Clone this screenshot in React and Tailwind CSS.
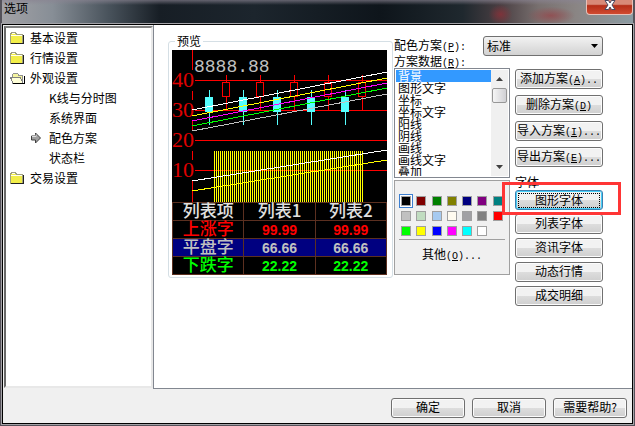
import React, { useState } from 'react';

const menu = [
  { name: "基本设置", icon: "closed" },
  { name: "行情设置", icon: "closed" },
  { name: "外观设置", icon: "open", children: ["K线与分时图", "系统界面", "配色方案", "状态栏"] },
  { name: "交易设置", icon: "closed" },
];

const items = ["背景", "图形文字", "坐标", "坐标文字", "阳线", "阴线", "画线", "画线文字", "叠加"];

const colors = [
  "#000000", "#800000", "#008000", "#808000", "#000080", "#800080", "#008080",
  "#c0c0c0", "#c0dcc0", "#a6caf0", "#fffbf0", "#a0a0a4", "#808080", "#ff0000",
  "#00ff00", "#ffff00", "#0000ff", "#ff00ff", "#00ffff", "#ffffff",
];

const rows = [
  { name: "上涨字", value: "99.99", style: "text-[#ff0000]" },
  { name: "平盘字", value: "66.66", style: "text-[#c0c0c0] bg-[#000080]" },
  { name: "下跌字", value: "22.22", style: "text-[#00ff00]" },
];

function FolderIcon({ open }) {
  return (
    <svg className="w-[15px] h-[14px] shrink-0" viewBox="0 0 15 14" shapeRendering="crispEdges">
      {open ? (
        <>
          <path d="M2.5 12V3.5l1-1h4l1 1.500h4V12z" fill="#f4f4a0" stroke="#909090" />
          <path d="M0.5 6.5h10l2.500 5.500H3z" fill="#ffffd8" stroke="#808080" />
          <path d="M3 12.5h11V5" fill="none" stroke="#000" />
        </>
      ) : (
        <>
          <path d="M0.5 12V3.5l1-2h4l1 2h6V12z" fill="#f2ee48" stroke="#a0a080" />
          <path d="M1 4.5h11M2 2.500h3" stroke="#fffff0" />
          <path d="M1 12.5h12.500V4" fill="none" stroke="#222" />
        </>
      )}
    </svg>
  );
}

function ArrowIcon() {
  return (
    <svg className="w-[10px] h-[12px]" viewBox="0 0 10 12">
      <path d="M0.5 4h4V1l5 5-5 5V8h-4z" fill="#a0a0a0" stroke="#404040" />
      <path d="M1 4.5h4V2.5" fill="none" stroke="#ddd" />
    </svg>
  );
}

// half-width part of a label, e.g. (P):
function Hot({ letter, after }) {
  return (
    <span className="font-['Liberation_Mono',monospace] text-[10px] leading-none">
      (<u>{letter}</u>){after}
    </span>
  );
}

function Button({ children, active, small }) {
  return (
    <button
      className={`h-5 shrink-0 rounded-[3px] border leading-[16px] whitespace-nowrap overflow-hidden bg-linear-to-b from-[#f2f2f2] from-50% via-[#dddddd] via-50% to-[#cfcfcf] ${small ? "w-[74px]" : "w-[88px]"} ${active ? "border-[#3c7fb1] ring-1 ring-inset ring-[#48d0f8]" : "pb-[2px] border-[#707070] ring-1 ring-inset ring-[#fcfcfc]"}`}
    >
      {active ? <span className="block mx-[2px] h-[15px] leading-[12px] border border-dotted border-black">{children}</span> : children}
    </button>
  );
}

function Chart() {
  const levels = [30, 60, 90, 120];
  const candles = [37, 71, 105, 139, 173];
  const bars = Array.from({ length: 75 }, (_, i) => 42 + i * 2);
  return (
    <svg className="block w-full h-[152px]" viewBox="0 0 215 152" preserveAspectRatio="none" shapeRendering="crispEdges">
      <rect width="215" height="152" fill="#000" />
      <path d="M20.5 0v20M20.5 41v9M20.5 71v9M20.5 101v9M20.5 131v21" stroke="#f00" />
      {levels.map((y, i) => (
        <g key={y}>
          <path d={`M23 ${y + 0.5}h192`} stroke="#f00" />
          <text x="0" y={y + 7} fill="#e00000" fontSize="22" fontFamily="Liberation Serif, serif">{40 - i * 10}</text>
        </g>
      ))}
      {candles.map(x => (
        <g key={x}>
          <rect x={x - 4} y="47" width="8" height="15" fill="#55ffff" />
          <path d={`M${x + 0.5} 40v35`} stroke="#55ffff" />
          <path d={`M${x + 17.5} 25v7M${x + 17.5} 47v13`} stroke="#f00" />
          <rect x={x + 13.5} y="32.5" width="7" height="14" fill="#000" stroke="#f00" />
        </g>
      ))}
      {bars.map(x => <rect key={x} x={x} y="101" width="1" height="51" fill="#ff0" />)}
      <path d="M20 60L215 22" stroke="#fff" />
      <path d="M20 66L215 28" stroke="#ff0" />
      <path d="M20 71L215 33" stroke="#f0f" />
      <path d="M20 76L215 38" stroke="#0f0" />
      <path d="M20 81L215 44" stroke="#c0c0c0" />
      <path d="M20 131L215 100" stroke="#fff" />
      <path d="M20 141L215 110" stroke="#ff0" />
      <text x="22" y="22" fill="#c0c0c0" fontSize="18" fontFamily="Liberation Mono, monospace">8888.88</text>
    </svg>
  );
}

function Preview() {
  return (
    <fieldset className="w-[225px] shrink-0 self-start mt-[10px] rounded-[3px] border border-[#d5dfe5] pt-[3px] pr-[5px] pb-[2px] pl-[3px]">
      <legend className="ml-[3px] px-[2px] leading-[12px]">预览</legend>
      <Chart />
      <table className="w-full table-fixed border-collapse bg-black text-center text-[17px] leading-[14px]">
        <thead>
          <tr className="h-[18px] text-[#e0e0e0]">
            {["列表项", "列表1", "列表2"].map(h => (
              <th key={h} className="p-0 pb-[3px] border border-[#5c3020] font-medium">{h}</th>
            ))}
          </tr>
        </thead>
        <tbody>
          {rows.map(r => (
            <tr key={r.name} className={`h-[18px] ${r.style}`}>
              <td className="p-0 pb-[3px] border border-[#5c3020] font-medium">{r.name}</td>
              <td className="p-0 border border-[#5c3020] font-['Liberation_Sans',sans-serif] text-[14px] font-bold">{r.value}</td>
              <td className="p-0 border border-[#5c3020] font-['Liberation_Sans',sans-serif] text-[14px] font-bold">{r.value}</td>
            </tr>
          ))}
        </tbody>
      </table>
    </fieldset>
  );
}

function ItemList() {
  const [selected, setSelected] = useState("背景");
  return (
    <div className="flex h-[110px] border border-[#828790] bg-white p-px">
      <ul role="listbox" aria-labelledby="items-label" className="flex-1 overflow-hidden leading-[12px]">
        {items.map(s => (
          <li
            key={s}
            role="option"
            aria-selected={s === selected}
            onClick={() => setSelected(s)}
            className={`h-[12px] pl-[2px] cursor-default ${s === selected ? "bg-[#3399ff] text-white" : ""}`}
          >
            {s}
          </li>
        ))}
      </ul>
      <div className="w-[17px] flex flex-col items-center bg-[#f0f0f0]">
        <button aria-label="向上" className="w-full h-[18px] flex items-center justify-center">
          <svg className="w-[7px] h-[4px]" viewBox="0 0 7 4"><path d="M0 4l3.500-4L7 4z" fill="#404040" /></svg>
        </button>
        <div className="w-[15px] h-[15px] rounded-[2px] border border-[#979797] bg-linear-to-r from-[#f6f6f6] to-[#d0d0d4]" />
        <button aria-label="向下" className="w-full h-[18px] mt-auto flex items-center justify-center">
          <svg className="w-[7px] h-[4px]" viewBox="0 0 7 4"><path d="M0 0l3.500 4L7 0z" fill="#404040" /></svg>
        </button>
      </div>
    </div>
  );
}

function Palette() {
  const [color, setColor] = useState("#000000");
  return (
    <div className="mt-[2px] h-[95px] border border-[#a0a0a0] bg-[#f0f0f0] px-1">
      <div className="grid grid-cols-7 gap-px pt-[13px]">
        {colors.map(c => (
          <button
            key={c}
            aria-label={c}
            onClick={() => setColor(c)}
            className={`w-[14px] h-[14px] p-px border ${c === color ? "border-[#3c7fd0] bg-white" : "border-transparent"}`}
          >
            <span className="block w-[10px] h-[10px] border border-[#a0a0a0]" style={{ backgroundColor: c }} />
          </button>
        ))}
      </div>
      <div className="mt-[1px] border-t border-[#a0a0a0]" />
      <button className="block w-full mt-[6px] text-center leading-[16px]">其他<Hot letter="O" after="..." /></button>
    </div>
  );
}

function TitleBar() {
  return (
    <header className="flex h-6 justify-between bg-[radial-gradient(ellipse_12px_10px_at_79%_60%,#8a3038cc,transparent),radial-gradient(ellipse_24px_9px_at_87%_65%,#94484ccc,transparent),linear-gradient(to_bottom,#8a8492aa,transparent_5px),linear-gradient(to_right,#a3a2a6,#878e96_8%,#48525b_17%,#171e25_25%,#1c252d_40%,#0e151b_60%,#1f282e_73%,#4a3f43_79%,#78706f_85%,#8a8584_91%,#8b9ba2)]">
      <h1 className="pl-[2px] leading-[16px]">选项</h1>
      <button aria-label="关闭" className="w-[47px] h-[15px] flex justify-center rounded-b-[4px] border border-t-0 border-[#e8c0b8] bg-linear-to-b from-[#d88a78] from-30% via-[#b52e18] via-40% to-[#d04a30]">
        <svg className="w-[12px] h-[11px]" viewBox="0 0 12 11">
          <path d="M1 0.5h3.500l1.500 2.500 1.500-2.500H11L8 5l3 4.500H7.500L6 7 4.500 9.500H1L4 5z" fill="#fff" stroke="#4a4a60" />
        </svg>
      </button>
    </header>
  );
}

export default function App() {
  const [page, setPage] = useState("配色方案");

  return (
    <div className="min-h-screen flex flex-col bg-[#55525a] px-[2px] pb-[2px] font-['Noto_Sans_CJK_SC',sans-serif] text-[12px] text-black">
      <TitleBar />
      <div className="flex-1 flex flex-col border border-black ring-1 ring-[#a4a3a8] bg-[#f0f0f0]">
        <main className="flex-1 flex">
          <nav className="w-[149px] shrink-0 m-px mr-0 border-2 border-t-[#808080] border-l-[#696969] border-r-[#e8e8e8] border-b-[#e8e8e8] bg-white">
            <ul>
              {menu.map(m => (
                <li key={m.name}>
                  <button className="flex h-5 items-center gap-[5px] pl-[4px]">
                    <FolderIcon open={m.icon === "open"} />
                    {m.name}
                  </button>
                  {m.children && (
                    <ul>
                      {m.children.map(c => (
                        <li key={c}>
                          <button onClick={() => setPage(c)} className="flex h-5 items-center">
                            <span className="w-[43px] pl-[25px]">{page === c && <ArrowIcon />}</span>
                            {c}
                          </button>
                        </li>
                      ))}
                    </ul>
                  )}
                </li>
              ))}
            </ul>
          </nav>
          <section className="flex-1 flex border-l border-b border-[#828790] bg-white pl-[14px]">
            <Preview />
            <div className="w-[209px] ml-px shrink-0 pt-[11px]">
              <div className="flex h-8 justify-between items-start">
                <div className="pt-px leading-[15px]">
                  <label htmlFor="scheme" className="block">配色方案<Hot letter="P" after=":" /></label>
                  <span id="items-label" className="block">方案数据<Hot letter="R" after=":" /></span>
                </div>
                <div className="relative w-[120px]">
                  <select id="scheme" className="block w-full h-5 appearance-none rounded-[3px] border border-[#707070] bg-linear-to-b from-[#f2f2f2] to-[#d2d2d2] pl-[3px] leading-[16px]">
                    <option>标准</option>
                  </select>
                  <svg className="absolute right-[5px] top-[8px] w-[7px] h-[4px] pointer-events-none" viewBox="0 0 7 4"><path d="M0 0h7L3.500 4z" /></svg>
                </div>
              </div>
              <div className="flex gap-[5px]">
                <div className="w-[116px]">
                  <ItemList />
                  <Palette />
                </div>
                <div className="w-[88px] pt-px">
                  <div className="flex flex-col gap-[6px]">
                    <Button>添加方案<Hot letter="A" after=".." /></Button>
                    <Button>删除方案<Hot letter="D" /></Button>
                    <Button>导入方案<Hot letter="I" after="..." /></Button>
                    <Button>导出方案<Hot letter="E" after="..." /></Button>
                  </div>
                  <h2 className="mt-[9px] flex items-center gap-[6px] leading-[12px]">
                    字体<span className="w-[54px] border-t border-[#a0a0a0]" />
                  </h2>
                  <div className="relative mt-[2px] flex flex-col gap-1">
                    <Button active>图形字体</Button>
                    <Button>列表字体</Button>
                    <Button>资讯字体</Button>
                    <Button>动态行情</Button>
                    <Button>成交明细</Button>
                    <div className="absolute -left-[13px] -top-[8px] w-[119px] h-[33px] border-3 border-[#ff3535] pointer-events-none" />
                  </div>
                </div>
              </div>
            </div>
          </section>
        </main>
        <footer className="flex justify-end gap-[7px] pt-[9px] pr-[5px] pb-[5px]">
          <Button small>确定</Button>
          <Button small>取消</Button>
          <Button small>需要帮助?</Button>
        </footer>
      </div>
    </div>
  );
}
